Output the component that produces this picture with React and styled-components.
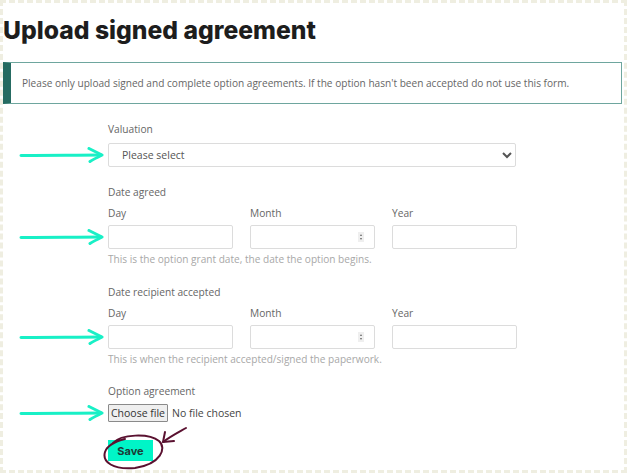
import React from "react";
import styled, { createGlobalStyle } from "styled-components";

const GlobalStyle = createGlobalStyle`
  html, body {
    margin: 0;
    padding: 0;
    background: #fff;
  }
  body {
    font-family: "Open Sans", "Liberation Sans", sans-serif;
    color: #555;
  }
`;

const Frame = styled.div`
  box-sizing: border-box;
  width: 627px;
  height: 473px;
  border: 3px dashed #efeee1;
  overflow: hidden;
`;

const Title = styled.h1`
  margin: 13px 0 0 0;
  font-family: Inter, "Liberation Sans", sans-serif;
  font-weight: 800;
  font-size: 24.7px;
  line-height: 28px;
  color: #1d1d1d;
`;

const Notice = styled.div`
  margin: 18px 2px 0 -1px;
  height: 42px;
  box-sizing: border-box;
  border: 1px solid #6ea69e;
  border-left: 9px solid #266b62;
  display: flex;
  align-items: center;
  padding-left: 11px;
  font-size: 10.1px;
  color: #666;
`;

const Form = styled.form`
  margin-top: 18px;
  display: flex;
  flex-direction: column;
`;

const Field = styled.div`
  display: flex;
  flex-direction: column;
  margin-bottom: ${(p) => p.$gap || 0}px;
`;

const Label = styled.div`
  margin-left: 105px;
  font-size: 10.2px;
  line-height: 14px;
  color: #666;
  margin-bottom: ${(p) => p.$space || 7}px;
`;

const ControlRow = styled.div`
  display: flex;
  align-items: center;
`;

const Pointer = styled.div`
  width: 105px;
  flex: none;
  display: flex;
  padding-left: 16px;
  box-sizing: border-box;
`;

const Select = styled.select`
  width: 408px;
  height: 24px;
  box-sizing: border-box;
  border: 1px solid #dcdcdc;
  border-radius: 2px;
  background: #fff;
  padding: 0 9px;
  font-family: "Open Sans", "Liberation Sans", sans-serif;
  font-size: 10.5px;
  color: #555;
`;

const DateGrid = styled.div`
  display: grid;
  grid-template-columns: repeat(3, 125px);
  column-gap: 17px;
  margin-left: 105px;
  margin-bottom: 5px;
`;

const DateLabel = styled.div`
  font-size: 10.2px;
  line-height: 14px;
  color: #666;
`;

const DateInputs = styled.div`
  display: grid;
  grid-template-columns: repeat(3, 125px);
  column-gap: 17px;
`;

const InputBox = styled.div`
  position: relative;
  height: 24px;
  box-sizing: border-box;
  border: 1px solid #dcdcdc;
  border-radius: 2px;
  background: #fff;
`;

const Spinner = styled.span`
  position: absolute;
  right: 10px;
  top: 6px;
  width: 6px;
  height: 10px;
  background: #efefef;
  display: flex;
  flex-direction: column;
  align-items: center;
  justify-content: center;
  gap: 2px;
  &::before,
  &::after {
    content: "";
    width: 0;
    height: 0;
    border-left: 1.5px solid transparent;
    border-right: 1.5px solid transparent;
  }
  &::before {
    border-bottom: 2px solid #666;
  }
  &::after {
    border-top: 2px solid #666;
  }
`;

const Hint = styled.div`
  margin: 3px 0 0 105px;
  font-size: 10.1px;
  line-height: 14px;
  color: #a8a8a8;
`;

const FilePicker = styled.label`
  display: flex;
  align-items: center;
  gap: 4px;
  font-size: 10.5px;
  color: #444;
  cursor: pointer;

  input {
    display: none;
  }
`;

const FileButton = styled.span`
  display: inline-flex;
  align-items: center;
  justify-content: center;
  box-sizing: border-box;
  width: 60px;
  height: 18px;
  border: 1px solid #8a8a8a;
  border-radius: 1px;
  background: #efefef;
  color: #333;
  font-size: 10.5px;
`;

const SaveWrap = styled.div`
  position: relative;
  margin: 18px 0 0 105px;
  width: 45px;
`;

const SaveButton = styled.button`
  display: block;
  width: 45px;
  height: 21px;
  border: none;
  background: #00f5c7;
  font-family: Inter, "Liberation Sans", sans-serif;
  font-weight: 700;
  font-size: 11px;
  color: #1d3b36;
  padding: 0;
`;

const Scribble = styled.svg`
  position: absolute;
  left: -9px;
  top: -14px;
  overflow: visible;
  pointer-events: none;
`;

function Arrow() {
  return (
    <svg width="86" height="16" viewBox="0 0 86 16">
      <path
        d="M2 8.5 C 25 8, 55 8.3, 82 8"
        fill="none"
        stroke="#18f0c6"
        strokeWidth="3"
        strokeLinecap="round"
      />
      <path
        d="M70 1.5 C 75 4, 79 6, 83 8 C 79 10, 75 12, 71 14.5"
        fill="none"
        stroke="#18f0c6"
        strokeWidth="3"
        strokeLinecap="round"
        strokeLinejoin="round"
      />
    </svg>
  );
}

function DateField({ title, hint, gap }) {
  return (
    <Field $gap={gap}>
      <Label $space={7}>{title}</Label>
      <DateGrid>
        <DateLabel>Day</DateLabel>
        <DateLabel>Month</DateLabel>
        <DateLabel>Year</DateLabel>
      </DateGrid>
      <ControlRow>
        <Pointer>
          <Arrow />
        </Pointer>
        <DateInputs>
          <InputBox />
          <InputBox>
            <Spinner />
          </InputBox>
          <InputBox />
        </DateInputs>
      </ControlRow>
      <Hint>{hint}</Hint>
    </Field>
  );
}

export default function App() {
  return (
    <>
      <GlobalStyle />
      <Frame>
        <Title>Upload signed agreement</Title>
        <Notice>
          Please only upload signed and complete option agreements. If the option
          hasn't been accepted do not use this form.
        </Notice>
        <Form onSubmit={(e) => e.preventDefault()}>
          <Field $gap={18}>
            <Label>Valuation</Label>
            <ControlRow>
              <Pointer>
                <Arrow />
              </Pointer>
              <Select defaultValue="">
                <option value="">Please select</option>
              </Select>
            </ControlRow>
          </Field>
          <DateField
            title="Date agreed"
            hint="This is the option grant date, the date the option begins."
            gap={19}
          />
          <DateField
            title="Date recipient accepted"
            hint="This is when the recipient accepted/signed the paperwork."
            gap={18}
          />
          <Field>
            <Label $space={6}>Option agreement</Label>
            <ControlRow>
              <Pointer>
                <Arrow />
              </Pointer>
              <FilePicker>
                <input type="file" />
                <FileButton>Choose file</FileButton>
                No file chosen
              </FilePicker>
            </ControlRow>
          </Field>
          <SaveWrap>
            <SaveButton type="submit">Save</SaveButton>
            <Scribble width="90" height="50" viewBox="0 0 90 50">
              <path
                d="M14 17 C 22 8, 50 7, 60 15 C 68 22, 62 38, 36 42 C 14 44, 3 36, 6 26 C 8 20, 14 16, 26 13"
                fill="none"
                stroke="#5a1130"
                strokeWidth="2"
                strokeLinecap="round"
              />
              <path
                d="M87 2 C 80 6, 72 10, 64 16"
                fill="none"
                stroke="#5a1130"
                strokeWidth="2"
                strokeLinecap="round"
              />
              <path
                d="M66 6 L 64 16 L 75 15"
                fill="none"
                stroke="#5a1130"
                strokeWidth="2"
                strokeLinecap="round"
                strokeLinejoin="round"
              />
            </Scribble>
          </SaveWrap>
        </Form>
      </Frame>
    </>
  );
}
